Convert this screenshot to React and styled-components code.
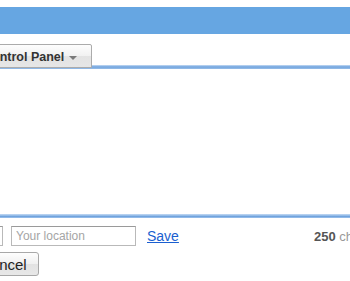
import React from "react";
import styled, { createGlobalStyle } from "styled-components";

const GlobalStyle = createGlobalStyle`
  html, body {
    margin: 0;
    padding: 0;
    background: #fff;
    overflow: hidden;
  }
  body {
    font-family: "Liberation Sans", Arial, sans-serif;
  }
`;

const Page = styled.div`
  width: 350px;
  height: 281px;
  overflow: hidden;
  background: #fff;
`;

const Inner = styled.div`
  margin-left: -28px;
  width: 460px;
  padding-top: 7px;
  display: flex;
  flex-direction: column;
`;

const Banner = styled.div`
  height: 27px;
  background: #66a6e2;
`;

const TabBar = styled.div`
  margin-top: 10px;
  height: 25px;
  display: flex;
  align-items: flex-start;
  background: linear-gradient(
      to bottom,
      #c6dbf3 0,
      #9bc0ea 1px,
      #6a9fdc 2px,
      #8fb8e6 3px
    )
    bottom / 100% 4px no-repeat;
`;

const Tab = styled.button`
  box-sizing: border-box;
  width: 120px;
  height: 24px;
  padding: 1px 0 0 10px;
  display: flex;
  align-items: center;
  gap: 5px;
  border: 1px solid #ababab;
  border-radius: 2px 2px 0 0;
  background: linear-gradient(#fdfdfd, #f1f1f1 50%, #e3e3e3 51%, #e6e6e6);
  font-family: inherit;
  font-size: 12.5px;
  font-weight: bold;
  color: #333;
  cursor: pointer;
`;

const Caret = styled.span`
  width: 0;
  height: 0;
  border-left: 4px solid transparent;
  border-right: 4px solid transparent;
  border-top: 4px solid #7a7a7a;
  margin-top: 2px;
`;

const Editor = styled.div`
  height: 145px;
  background: #fff;
`;

const Rule = styled.div`
  height: 4px;
  background: linear-gradient(to bottom, #c6dbf3, #9bc0ea, #6a9fdc, #a9c9ee);
`;

const FieldRow = styled.div`
  margin-top: 8px;
  height: 20px;
  display: flex;
  align-items: center;
`;

const Field = styled.input`
  box-sizing: border-box;
  width: ${({ $w }) => $w}px;
  height: 20px;
  margin-right: ${({ $gap }) => $gap}px;
  padding: 0 4px;
  border: 1px solid #b9b9b9;
  border-top-color: #9a9a9a;
  font-family: inherit;
  font-size: 12px;
  color: #333;
  &::placeholder {
    color: #a5a5a5;
  }
`;

const SaveLink = styled.a`
  font-size: 14px;
  color: #1a5fd0;
  text-decoration: underline;
  cursor: pointer;
`;

const Counter = styled.span`
  margin-left: 135px;
  font-size: 13px;
  color: #999;
  white-space: nowrap;
  b {
    color: #555;
  }
`;

const Actions = styled.div`
  margin-top: 6px;
  display: flex;
`;

const Button = styled.button`
  height: 24px;
  padding: 0 11px 0 7px;
  border: 1px solid #a8a8a8;
  border-radius: 3px;
  background: linear-gradient(#fefefe, #f0f0f0 50%, #e2e2e2 51%, #e8e8e8);
  font-family: inherit;
  font-size: 15px;
  color: #222;
  cursor: pointer;
`;

export default function App() {
  return (
    <Page>
      <GlobalStyle />
      <Inner>
        <Banner />
        <TabBar>
          <Tab type="button">
            Control Panel <Caret />
          </Tab>
        </TabBar>
        <Editor />
        <Rule />
        <FieldRow>
          <Field $w={31} $gap={8} />
          <Field $w={125} $gap={11} placeholder="Your location" />
          <SaveLink>Save</SaveLink>
          <Counter>
            <b>250</b> characters left
          </Counter>
        </FieldRow>
        <Actions>
          <Button type="button">Cancel</Button>
        </Actions>
      </Inner>
    </Page>
  );
}
